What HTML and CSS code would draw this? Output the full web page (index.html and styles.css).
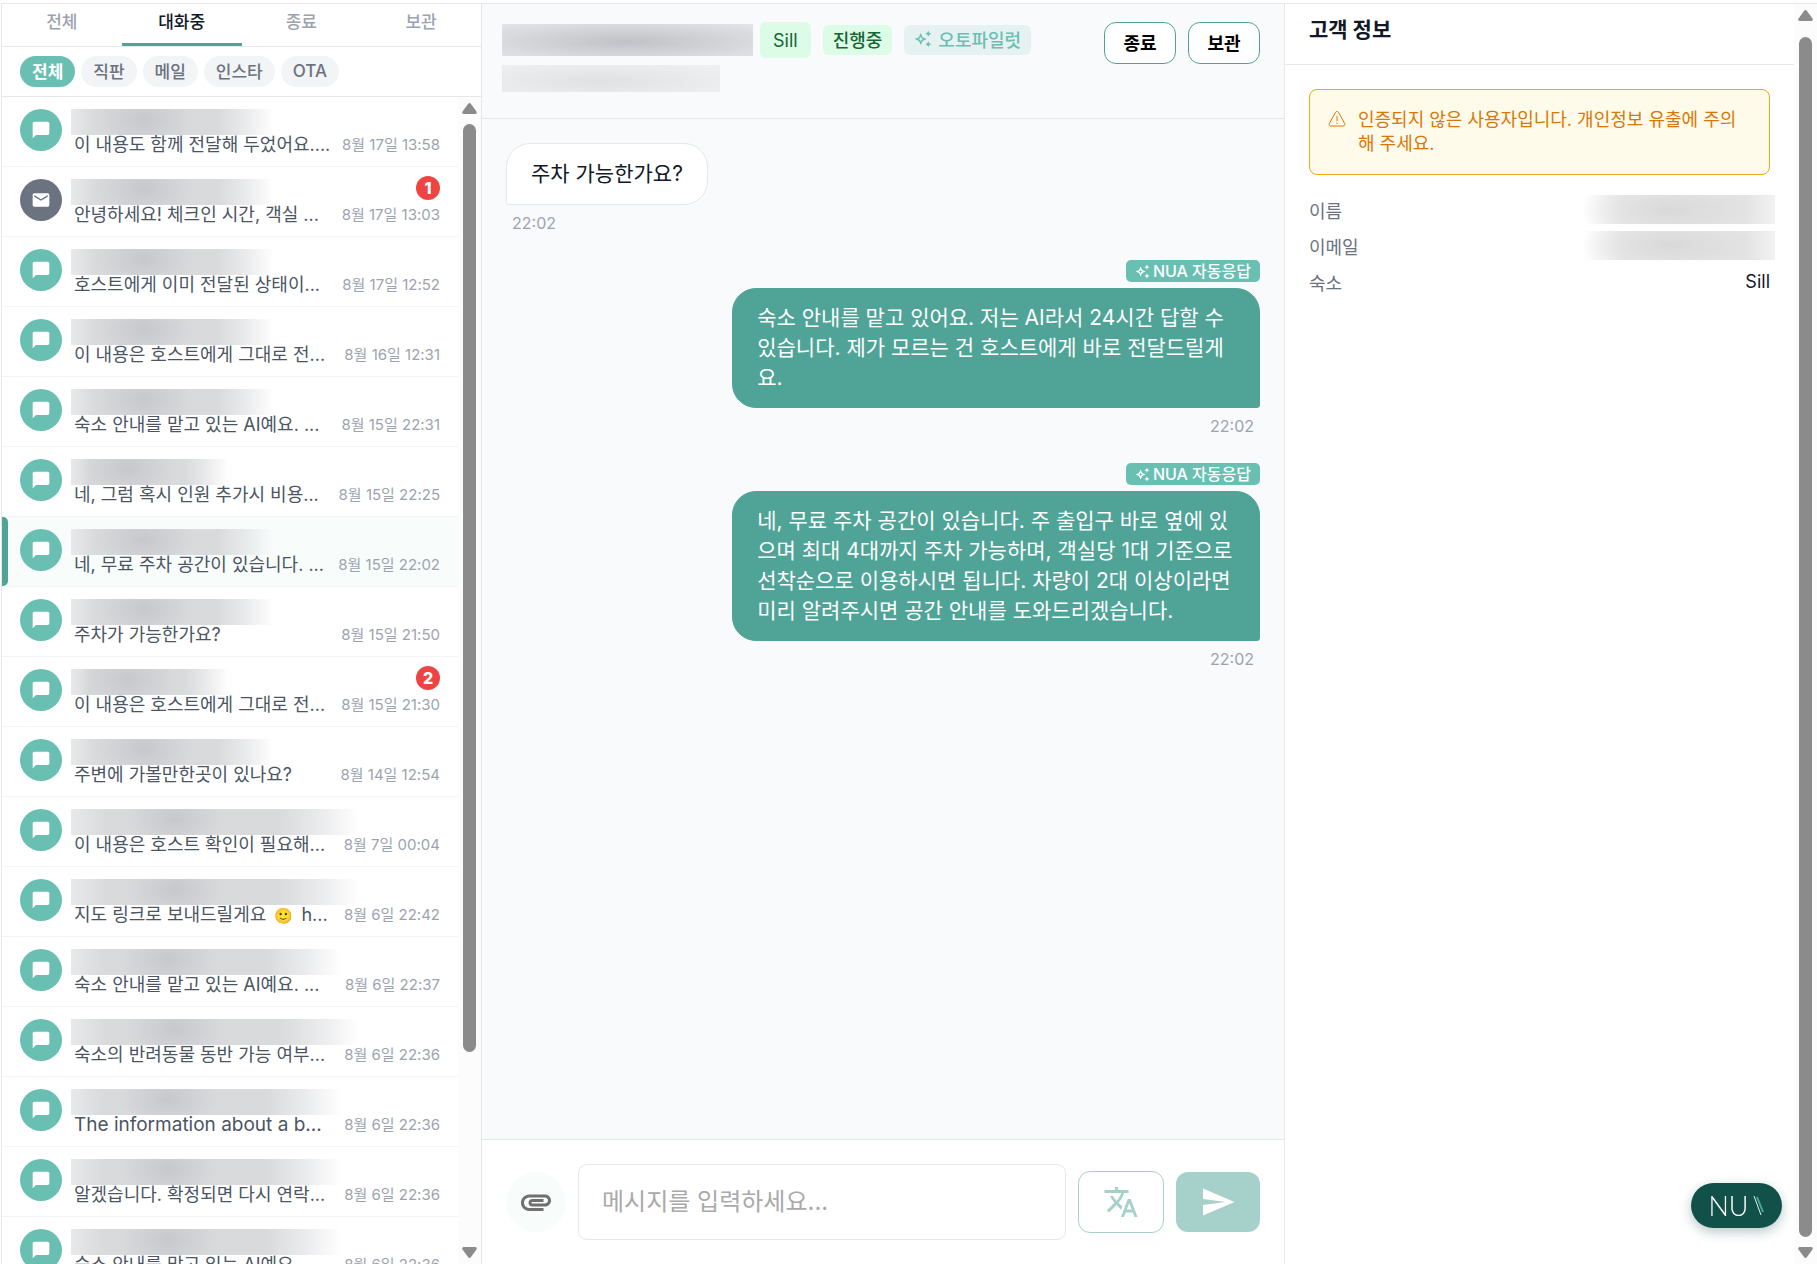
FILE: index.html
```
<!DOCTYPE html>
<html lang="ko">
<head>
<meta charset="UTF-8">
<meta name="viewport" content="width=device-width, initial-scale=1.0">
<title>NUA</title>
<link rel="stylesheet" href="styles.css">
</head>
<body>
<svg class="sprite" aria-hidden="true">
    <symbol id="chat" viewBox="0 0 24 24"><path d="M20 2H4c-1.100 0-2 .9-2 2v18l4-4h14c1.100 0 2-.9 2-2V4c0-1.100-.9-2-2-2z"/></symbol>
    <symbol id="mail" viewBox="0 0 24 24"><path d="M20 4H4c-1.100 0-1.990.9-1.990 2L2 18c0 1.100.9 2 2 2h16c1.100 0 2-.9 2-2V6c0-1.100-.9-2-2-2zm0 4-8 5-8-5V6l8 5 8-5v2z"/></symbol>
    <symbol id="sparkle" viewBox="0 0 24 24"><path d="m19 9 1.250-2.750L23 5l-2.750-1.250L19 1l-1.250 2.750L15 5l2.750 1.250L19 9zm0 6-1.250 2.750L15 19l2.750 1.250L19 23l1.250-2.750L23 19l-2.750-1.250L19 15zm-7.500-5.500L9 4 6.500 9.500 1 12l5.500 2.500L9 20l2.500-5.500L17 12l-5.500-2.500zm-1.510 3.490L9 15.170l-.99-2.180L5.830 12l2.180-.99L9 8.830l.99 2.180 2.180.99-2.180.99z"/></symbol>
    <symbol id="arrow" viewBox="0 0 15 11"><path d="M6 1Q7.500-1 9 1L14.500 8.500Q15.500 11 13 11H2Q-.5 11 .5 8.500Z"/></symbol>
</svg>

<div class="app">
    <aside class="sidebar">
        <nav class="tabs">
            <button>전체</button>
            <button class="active">대화중</button>
            <button>종료</button>
            <button>보관</button>
        </nav>
        <div class="chips">
            <button class="active">전체</button>
            <button>직판</button>
            <button>메일</button>
            <button>인스타</button>
            <button>OTA</button>
        </div>
        <div class="list-wrap">
            <ul class="list">
                <li><span class="avatar"><svg><use href="#chat"/></svg></span><div class="body"><div class="top"><span class="name"></span></div><div class="row"><span class="text">이 내용도 함께 전달해 두었어요....</span><time>8월 17일 13:58</time></div></div></li>
                <li><span class="avatar mail"><svg><use href="#mail"/></svg></span><div class="body"><div class="top"><span class="name"></span><span class="count">1</span></div><div class="row"><span class="text">안녕하세요! 체크인 시간, 객실 ...</span><time>8월 17일 13:03</time></div></div></li>
                <li><span class="avatar"><svg><use href="#chat"/></svg></span><div class="body"><div class="top"><span class="name"></span></div><div class="row"><span class="text">호스트에게 이미 전달된 상태이...</span><time>8월 17일 12:52</time></div></div></li>
                <li><span class="avatar"><svg><use href="#chat"/></svg></span><div class="body"><div class="top"><span class="name"></span></div><div class="row"><span class="text">이 내용은 호스트에게 그대로 전...</span><time>8월 16일 12:31</time></div></div></li>
                <li><span class="avatar"><svg><use href="#chat"/></svg></span><div class="body"><div class="top"><span class="name"></span></div><div class="row"><span class="text">숙소 안내를 맡고 있는 AI예요. ...</span><time>8월 15일 22:31</time></div></div></li>
                <li><span class="avatar"><svg><use href="#chat"/></svg></span><div class="body"><div class="top"><span class="name short"></span></div><div class="row"><span class="text">네, 그럼 혹시 인원 추가시 비용...</span><time>8월 15일 22:25</time></div></div></li>
                <li class="active"><span class="avatar"><svg><use href="#chat"/></svg></span><div class="body"><div class="top"><span class="name"></span></div><div class="row"><span class="text">네, 무료 주차 공간이 있습니다. ...</span><time>8월 15일 22:02</time></div></div></li>
                <li><span class="avatar"><svg><use href="#chat"/></svg></span><div class="body"><div class="top"><span class="name"></span></div><div class="row"><span class="text">주차가 가능한가요?</span><time>8월 15일 21:50</time></div></div></li>
                <li><span class="avatar"><svg><use href="#chat"/></svg></span><div class="body"><div class="top"><span class="name short"></span><span class="count">2</span></div><div class="row"><span class="text">이 내용은 호스트에게 그대로 전...</span><time>8월 15일 21:30</time></div></div></li>
                <li><span class="avatar"><svg><use href="#chat"/></svg></span><div class="body"><div class="top"><span class="name"></span></div><div class="row"><span class="text">주변에 가볼만한곳이 있나요?</span><time>8월 14일 12:54</time></div></div></li>
                <li><span class="avatar"><svg><use href="#chat"/></svg></span><div class="body"><div class="top"><span class="name long"></span></div><div class="row"><span class="text">이 내용은 호스트 확인이 필요해...</span><time>8월 7일 00:04</time></div></div></li>
                <li><span class="avatar"><svg><use href="#chat"/></svg></span><div class="body"><div class="top"><span class="name long"></span></div><div class="row"><span class="text">지도 링크로 보내드릴게요 <span class="emoji">🙂</span> h...</span><time>8월 6일 22:42</time></div></div></li>
                <li><span class="avatar"><svg><use href="#chat"/></svg></span><div class="body"><div class="top"><span class="name wide"></span></div><div class="row"><span class="text">숙소 안내를 맡고 있는 AI예요. ...</span><time>8월 6일 22:37</time></div></div></li>
                <li><span class="avatar"><svg><use href="#chat"/></svg></span><div class="body"><div class="top"><span class="name long"></span></div><div class="row"><span class="text">숙소의 반려동물 동반 가능 여부...</span><time>8월 6일 22:36</time></div></div></li>
                <li><span class="avatar"><svg><use href="#chat"/></svg></span><div class="body"><div class="top"><span class="name wide"></span></div><div class="row"><span class="text latin">The information about a b...</span><time>8월 6일 22:36</time></div></div></li>
                <li><span class="avatar"><svg><use href="#chat"/></svg></span><div class="body"><div class="top"><span class="name wide"></span></div><div class="row"><span class="text">알겠습니다. 확정되면 다시 연락...</span><time>8월 6일 22:36</time></div></div></li>
                <li><span class="avatar"><svg><use href="#chat"/></svg></span><div class="body"><div class="top"><span class="name wide"></span></div><div class="row"><span class="text">숙소 안내를 맡고 있는 AI예요. ...</span><time>8월 6일 22:36</time></div></div></li>
            </ul>
            <div class="scrollbar">
                <svg><use href="#arrow"/></svg>
                <div class="track"><div class="thumb part"></div></div>
                <svg class="down"><use href="#arrow"/></svg>
            </div>
        </div>
    </aside>

    <main class="chat">
        <header class="chat-header">
            <div class="guest">
                <div class="guest-top">
                    <span class="guest-name"></span>
                    <span class="tag place">Sill</span>
                    <span class="tag state">진행중</span>
                    <span class="tag auto"><svg><use href="#sparkle"/></svg>오토파일럿</span>
                </div>
                <span class="guest-mail"></span>
            </div>
            <div class="actions">
                <button>종료</button>
                <button>보관</button>
            </div>
        </header>

        <section class="messages">
            <div class="message">
                <p class="bubble">주차 가능한가요?</p>
                <time>22:02</time>
            </div>
            <div class="message mine">
                <span class="reply-tag"><svg><use href="#sparkle"/></svg>NUA 자동응답</span>
                <p class="bubble">숙소 안내를 맡고 있어요. 저는 AI라서 24시간 답할 수 있습니다. 제가 모르는 건 호스트에게 바로 전달드릴게요.</p>
                <time>22:02</time>
            </div>
            <div class="message mine">
                <span class="reply-tag"><svg><use href="#sparkle"/></svg>NUA 자동응답</span>
                <p class="bubble">네, 무료 주차 공간이 있습니다. 주 출입구 바로 옆에 있으며 최대 4대까지 주차 가능하며, 객실당 1대 기준으로 선착순으로 이용하시면 됩니다. 차량이 2대 이상이라면 미리 알려주시면 공간 안내를 도와드리겠습니다.</p>
                <time>22:02</time>
            </div>
        </section>

        <form class="composer">
            <button type="button" class="attach" aria-label="파일 첨부"><svg viewBox="0 0 24 24"><path d="M2 12.500C2 9.460 4.460 7 7.500 7H18c2.210 0 4 1.790 4 4s-1.790 4-4 4H9.500C8.120 15 7 13.880 7 12.500S8.120 10 9.500 10H17v2H9.410c-.55 0-.55 1 0 1H18c1.100 0 2-.9 2-2s-.9-2-2-2H7.500C5.570 9 4 10.570 4 12.500S5.570 16 7.500 16H17v2H7.500C4.460 18 2 15.540 2 12.500z"/></svg></button>
            <textarea rows="1" placeholder="메시지를 입력하세요..." aria-label="메시지"></textarea>
            <button type="button" class="translate" aria-label="번역"><svg viewBox="0 0 24 24"><path d="m12.870 15.070-2.540-2.510.03-.03c1.740-1.940 2.980-4.170 3.710-6.530H17V4h-7V2H8v2H1v1.990h11.170C11.500 7.920 10.440 9.750 9 11.350 8.070 10.320 7.300 9.190 6.690 8h-2c.73 1.630 1.730 3.170 2.980 4.560l-5.090 5.020L4 19l5-5 3.110 3.110.76-2.040zM18.500 10h-2L12 22h2l1.120-3h4.750L21 22h2l-4.500-12zm-2.620 7 1.620-4.330L19.120 17h-3.240z"/></svg></button>
            <button type="button" class="send" aria-label="보내기"><svg viewBox="0 0 24 24"><path d="M2.010 21 23 12 2.010 3 2 10l15 2-15 2z"/></svg></button>
        </form>
    </main>

    <aside class="info">
        <div class="info-main">
            <h2>고객 정보</h2>
            <div class="info-body">
                <div class="alert">
                    <svg viewBox="0 0 18 18"><path d="M9 1.500c.6 0 1.100.3 1.400.8l6.300 11.300c.6 1.100-.2 2.400-1.400 2.400H2.700c-1.200 0-2-1.300-1.400-2.400L7.600 2.300c.3-.5.8-.8 1.400-.8zM9 6v5M9 12.500v1.500"/></svg>
                    <p>인증되지 않은 사용자입니다. 개인정보 유출에 주의해 주세요.</p>
                </div>
                <dl>
                    <div><dt>이름</dt><dd class="hidden-value"></dd></div>
                    <div><dt>이메일</dt><dd class="hidden-value"></dd></div>
                    <div><dt>숙소</dt><dd>Sill</dd></div>
                </dl>
            </div>
        </div>
        <div class="scrollbar">
            <svg><use href="#arrow"/></svg>
            <div class="track"><div class="thumb"></div></div>
            <svg class="down"><use href="#arrow"/></svg>
        </div>
    </aside>
</div>

<button class="launcher">NU<svg viewBox="0 0 12 20"><path class="green" d="M4 1 10 16"/><path class="light" d="M1 0 8 19"/></svg></button>
</body>
</html>
```
FILE: styles.css
```
* {
    box-sizing: border-box;
}
body {
    margin: 0;
    padding-top: 3px;
    height: 100vh;
    overflow: hidden;
    background-color: #fff;
    color: #111827;
    font-family: Inter, "Noto Sans CJK KR", sans-serif;
    font-size: 18px;
}
button, textarea {
    font-family: inherit;
    padding: 0;
    border: none;
    background: none;
}
button {
    cursor: pointer;
}
p, h2, ul, dl, dd {
    margin: 0;
    padding: 0;
}
svg {
    fill: currentColor;
    flex-shrink: 0;
}
.sprite {
    display: none;
}
.app {
    display: grid;
    grid-template-columns: 481px 1fr 532px;
    height: 100%;
    margin-left: 1px;
    border-top: 1px solid #e5e7eb;
}
.app > * {
    min-width: 0;
    min-height: 0;
}

/* sidebar */
.sidebar {
    display: flex;
    flex-direction: column;
    border-left: 1px solid #e5e7eb;
    border-right: 1px solid #e5e7eb;
}
.tabs {
    display: flex;
    height: 43px;
    border-bottom: 1px solid #e5e7eb;
}
.tabs button {
    flex: 1;
    padding-bottom: 7px;
    border-bottom: 3px solid transparent;
    color: #9ca3af;
    font-size: 17px;
    font-weight: 500;
}
.tabs .active {
    border-color: #4fa497;
    color: #111827;
}
.chips {
    display: flex;
    align-items: center;
    gap: 6px;
    height: 50px;
    padding: 0 18px;
    border-bottom: 1px solid #e5e7eb;
}
.chips button {
    height: 31px;
    padding: 0 12px 2px;
    border-radius: 16px;
    background-color: #f3f4f6;
    color: #6b7280;
    font-size: 17px;
    font-weight: 500;
}
.chips .active {
    background-color: #6abfb3;
    color: #fff;
    font-weight: 700;
}
.list-wrap {
    display: flex;
    flex: 1;
    min-height: 0;
}
.list {
    flex: 1;
    min-width: 0;
    overflow: hidden;
    list-style: none;
}
.list li {
    display: flex;
    gap: 9px;
    height: 70px;
    padding: 9px 18px;
    border-bottom: 1px solid #f3f4f6;
}
.list .active {
    background-color: #f8fdfc;
}
.list .active::before {
    content: "";
    width: 6px;
    margin: -9px 3px -9px -18px;
    border-radius: 0 5px 5px 0;
    background-color: #4fa497;
}
.avatar {
    display: flex;
    align-items: center;
    justify-content: center;
    flex-shrink: 0;
    width: 42px;
    height: 42px;
    margin-top: 3px;
    border-radius: 50%;
    background-color: #6abfb3;
    color: #fff;
}
.avatar.mail {
    background-color: #6b7280;
}
.avatar svg {
    width: 20px;
    height: 20px;
}
.body {
    flex: 1;
    min-width: 0;
}
.top {
    display: flex;
    align-items: flex-start;
    justify-content: space-between;
    height: 29px;
}
.name {
    width: 203px;
    height: 26px;
    margin-top: 3px;
    background: radial-gradient(50px 32px at 36% 40%, #b0b3ba77, transparent), linear-gradient(90deg, #e8e9ea, #d9dadc 12%, #d9dadc 72%, #e0e1e399 88%, transparent);
}
.name.short {
    width: 158px;
}
.name.wide {
    width: 270px;
}
.name.long {
    width: 288px;
}
.count {
    width: 24px;
    height: 24px;
    border-radius: 50%;
    background-color: #ef4444;
    color: #fff;
    font-size: 16px;
    font-weight: 800;
    line-height: 24px;
    text-align: center;
}
.row {
    display: flex;
    align-items: center;
    justify-content: space-between;
    height: 20px;
    padding-left: 3px;
    line-height: 20px;
    white-space: nowrap;
}
.row .text {
    color: #4b5563;
}
.row .latin {
    font-size: 19px;
}
.row time {
    color: #9ca3af;
    font-size: 15px;
}
.emoji {
    margin: 0 3px;
    font-size: 15px;
}

/* scrollbars */
.scrollbar {
    display: flex;
    flex-direction: column;
    align-items: center;
    flex-shrink: 0;
    width: 23px;
    padding: 6px 0;
    background-color: #fcfcfc;
    color: #8b8b8b;
}
.scrollbar svg {
    width: 15px;
    height: 11px;
}
.scrollbar .down {
    transform: rotate(180deg);
}
.track {
    flex: 1;
    width: 13px;
    margin: 10px 0;
}
.info .track {
    margin-top: 16px;
}
.thumb {
    height: 100%;
    border-radius: 7px;
    background-color: #8b8b8b;
}
.thumb.part {
    height: calc(100% * 5 / 6);
}

/* chat */
.chat {
    display: flex;
    flex-direction: column;
    border-right: 1px solid #e5e7eb;
    background-color: #f9fafc;
}
.chat-header {
    display: flex;
    justify-content: space-between;
    height: 115px;
    padding: 18px 24px 18px 20px;
    border-bottom: 1px solid #e5e7eb;
}
.guest-top {
    display: flex;
    align-items: center;
    height: 36px;
}
.guest-name {
    width: 251px;
    height: 32px;
    margin-right: 7px;
    background: radial-gradient(200px 26px at 50% 55%, #c0c2c7, #cdcfd299 60%, transparent), #e6e7ea;
}
.guest-mail {
    display: block;
    width: 218px;
    height: 27px;
    margin-top: 7px;
    background: radial-gradient(170px 24px at 45% 60%, #dfe1e3, #e6e7e999 60%, transparent), #f0f1f3;
}
.tag {
    display: flex;
    align-items: center;
    gap: 6px;
    height: 30px;
    margin-right: 12px;
    padding: 0 10px 2px;
    border-radius: 6px;
    background-color: #dcfce7;
    color: #166534;
    font-weight: 500;
}
.tag.place {
    height: 36px;
    padding: 0 13px;
    font-weight: 400;
}
.tag.auto {
    background-color: #e5f2f1;
    color: #6abfb3;
}
.tag svg {
    width: 18px;
    height: 18px;
}
.actions {
    display: flex;
    gap: 12px;
}
.actions button {
    width: 72px;
    height: 42px;
    padding-bottom: 3px;
    border: 1px solid #4fa497;
    border-radius: 12px;
    background-color: #fff;
    color: #000;
    font-size: 18px;
    font-weight: 700;
}
.messages {
    display: flex;
    flex: 1;
    flex-direction: column;
    gap: 24px;
    min-height: 0;
    padding: 24px;
}
.message {
    display: flex;
    flex-direction: column;
    align-items: flex-start;
}
.message.mine {
    align-items: flex-end;
}
.bubble {
    max-width: 70%;
    padding: 15px 24px;
    border: 1px solid #e5e7eb;
    border-radius: 24px 24px 24px 3px;
    background-color: #fff;
    font-size: 21px;
    line-height: 30px;
}
.mine .bubble {
    padding: 14px 24px;
    border-color: #4fa497;
    border-radius: 24px 24px 3px 24px;
    background-color: #4fa497;
    color: #fff;
}
.message time {
    margin-top: 6px;
    padding: 0 6px;
    color: #9ca3af;
    font-size: 16px;
    line-height: 25px;
}
.reply-tag {
    display: flex;
    align-items: center;
    gap: 3px;
    height: 22px;
    margin-bottom: 6px;
    padding: 0 9px 3px;
    border-radius: 5px;
    background-color: #6abfb3;
    color: #fff;
    font-size: 16px;
    font-weight: 500;
}
.reply-tag svg {
    width: 15px;
    height: 15px;
    margin-top: 3px;
}
.composer {
    display: flex;
    align-items: center;
    gap: 12px;
    padding: 24px;
    border-top: 1px solid #e5e7eb;
    background-color: #fff;
}
.composer button {
    display: flex;
    align-items: center;
    justify-content: center;
    flex-shrink: 0;
}
.composer .attach {
    width: 60px;
    height: 60px;
    border-radius: 50%;
    background-color: #f8fdfc;
    color: #6f706f;
}
.composer svg {
    width: 36px;
    height: 36px;
}
.composer textarea {
    flex: 1;
    min-width: 0;
    height: 76px;
    padding: 19px 23px;
    border: 1px solid #e5e7eb;
    border-radius: 9px;
    font-size: 24px;
    line-height: 36px;
    resize: none;
}
.composer textarea::placeholder {
    color: #a9a9a9;
}
.composer .translate {
    width: 86px;
    height: 62px;
    border: 1px solid #a6d1ca;
    border-radius: 12px;
    color: #a6d1ca;
}
.composer .send {
    width: 84px;
    height: 60px;
    border-radius: 12px;
    background-color: #a6d1ca;
    color: #fff;
}

/* customer info */
.info {
    display: flex;
}
.info-main {
    flex: 1;
    min-width: 0;
}
.info h2 {
    height: 61px;
    padding: 11px 24px;
    border-bottom: 1px solid #e5e7eb;
    font-size: 21px;
    font-weight: 700;
    line-height: 30px;
}
.info-body {
    padding: 24px;
}
.alert {
    display: flex;
    gap: 12px;
    height: 86px;
    padding: 18px 24px 18px 18px;
    border: 1px solid #f0a818;
    border-radius: 8px;
    background-color: #fffbeb;
    color: #d97706;
    line-height: 24px;
}
.alert svg {
    width: 18px;
    height: 18px;
    margin-top: 2px;
    fill: none;
    stroke: currentColor;
}
.info dl {
    padding-top: 17px;
}
.info dl div {
    display: flex;
    align-items: center;
    justify-content: space-between;
    height: 36px;
    padding-bottom: 1px;
}
.info dt {
    color: #6b7280;
}
.info dd.hidden-value {
    width: 192px;
    height: 29px;
    margin-right: -5px;
    background: radial-gradient(90px 30px at 45% 50%, #cfcfcf99, transparent), linear-gradient(90deg, transparent, #eaeaea 20%, #e4e4e4 85%, #f2f2f2);
}

.launcher {
    position: fixed;
    right: 35px;
    bottom: 36px;
    display: flex;
    align-items: center;
    justify-content: center;
    gap: 4px;
    width: 91px;
    height: 45px;
    border-radius: 23px;
    background-color: #12504a;
    box-shadow: 0 4px 12px rgba(18, 80, 74, 0.3);
    color: #fff;
    font-family: Lato, sans-serif;
    font-size: 27px;
    font-weight: 300;
}
.launcher svg {
    width: 12px;
    height: 20px;
    stroke-width: 1;
}
.launcher .light {
    stroke: #e8f3f1;
}
.launcher .green {
    stroke: #4fa497;
    stroke-width: 2;
}
```
